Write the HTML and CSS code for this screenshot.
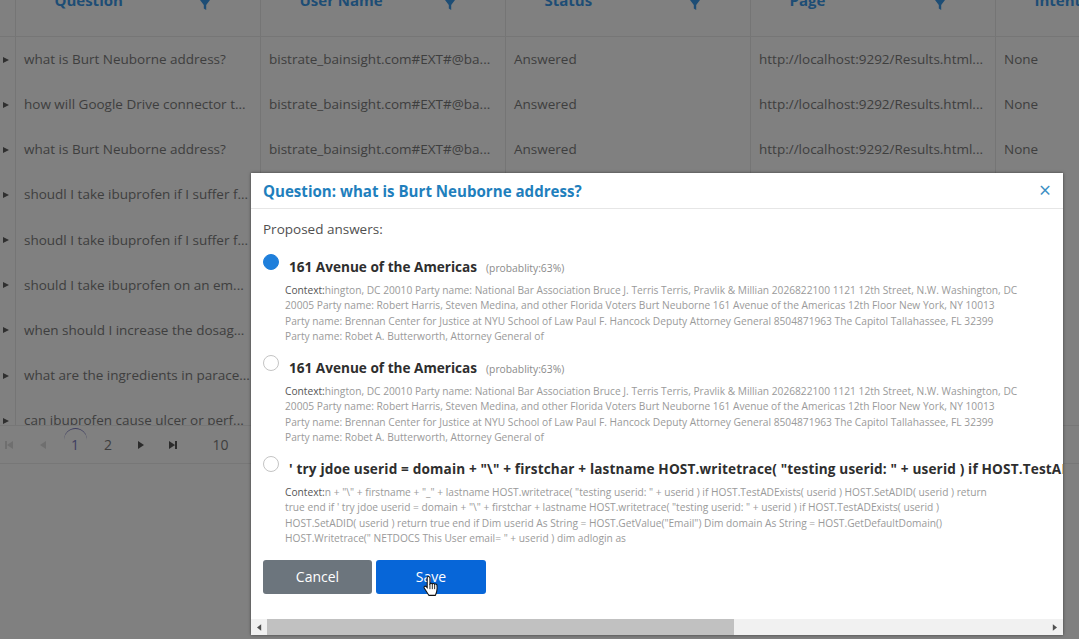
FILE: index.html
```html
<!DOCTYPE html>
<html lang="en">
<head>
<meta charset="utf-8">
<title>Questions</title>
<link rel="stylesheet" href="styles.css">
</head>
<body>
<main class="grid">
  <div class="head row-cols">
    <div class="expander"></div>
    <div class="hcell"><span class="hlabel">Question</span><svg class="funnel" viewBox="0 0 10 10"><path d="M0 0h10L6.200 5v5L3.800 8.500V5z"/></svg></div>
    <div class="hcell"><span class="hlabel">User Name</span><svg class="funnel" viewBox="0 0 10 10"><path d="M0 0h10L6.200 5v5L3.800 8.500V5z"/></svg></div>
    <div class="hcell"><span class="hlabel">Status</span><svg class="funnel" viewBox="0 0 10 10"><path d="M0 0h10L6.200 5v5L3.800 8.500V5z"/></svg></div>
    <div class="hcell"><span class="hlabel">Page</span><svg class="funnel" viewBox="0 0 10 10"><path d="M0 0h10L6.200 5v5L3.800 8.500V5z"/></svg></div>
    <div class="hcell hcell-last"><span class="hlabel">Intent</span></div>
  </div>
  <div class="rows">
    <div class="row row-cols"><div class="expander"><i class="caret"></i></div><div class="cell">what is Burt Neuborne address?</div><div class="cell">bistrate_bainsight.com#EXT#@ba...</div><div class="cell">Answered</div><div class="cell">http://localhost:9292/Results.html...</div><div class="cell cell-last">None</div></div>
    <div class="row row-cols"><div class="expander"><i class="caret"></i></div><div class="cell">how will Google Drive connector t...</div><div class="cell">bistrate_bainsight.com#EXT#@ba...</div><div class="cell">Answered</div><div class="cell">http://localhost:9292/Results.html...</div><div class="cell cell-last">None</div></div>
    <div class="row row-cols"><div class="expander"><i class="caret"></i></div><div class="cell">what is Burt Neuborne address?</div><div class="cell">bistrate_bainsight.com#EXT#@ba...</div><div class="cell">Answered</div><div class="cell">http://localhost:9292/Results.html...</div><div class="cell cell-last">None</div></div>
    <div class="row row-cols"><div class="expander"><i class="caret"></i></div><div class="cell">shoudl I take ibuprofen if I suffer f...</div><div class="cell"></div><div class="cell"></div><div class="cell"></div><div class="cell cell-last"></div></div>
    <div class="row row-cols"><div class="expander"><i class="caret"></i></div><div class="cell">shoudl I take ibuprofen if I suffer f...</div><div class="cell"></div><div class="cell"></div><div class="cell"></div><div class="cell cell-last"></div></div>
    <div class="row row-cols"><div class="expander"><i class="caret"></i></div><div class="cell">should I take ibuprofen on an em...</div><div class="cell"></div><div class="cell"></div><div class="cell"></div><div class="cell cell-last"></div></div>
    <div class="row row-cols"><div class="expander"><i class="caret"></i></div><div class="cell">when should I increase the dosag...</div><div class="cell"></div><div class="cell"></div><div class="cell"></div><div class="cell cell-last"></div></div>
    <div class="row row-cols"><div class="expander"><i class="caret"></i></div><div class="cell">what are the ingredients in parace...</div><div class="cell"></div><div class="cell"></div><div class="cell"></div><div class="cell cell-last"></div></div>
    <div class="row row-cols"><div class="expander"><i class="caret"></i></div><div class="cell">can ibuprofen cause ulcer or perf...</div><div class="cell"></div><div class="cell"></div><div class="cell"></div><div class="cell cell-last"></div></div>
  </div>
  <nav class="pager">
    <svg class="pg-icon dim" viewBox="0 0 10 10"><path d="M1 1h2v8H1zM9 1v8L3 5z"/></svg>
    <svg class="pg-icon dim" viewBox="0 0 10 10"><path d="M8 1v8L2 5z"/></svg>
    <span class="pg-num pg-current">1</span>
    <span class="pg-num">2</span>
    <svg class="pg-icon" viewBox="0 0 10 10"><path d="M2 1v8l6-4z"/></svg>
    <svg class="pg-icon" viewBox="0 0 10 10"><path d="M1 1v8l6-4zM7 1h2v8H7z"/></svg>
    <span class="pg-size">10</span>
  </nav>
</main>

<section class="modal">
  <header class="modal-head">
    <h2 class="modal-title">Question: what is Burt Neuborne address?</h2>
    <span class="modal-close">×</span>
  </header>
  <div class="modal-body">
    <p class="lead">Proposed answers:</p>
    <article class="answer">
      <div class="answer-top"><i class="radio radio-on"></i><strong class="answer-title">161 Avenue of the Americas</strong><span class="prob">(probablity:63%)</span></div>
      <p class="context"><span class="ctx-label">Context:</span>hington, DC 20010 Party name: National Bar Association Bruce J. Terris Terris, Pravlik &amp; Millian 2026822100 1121 12th Street, N.W. Washington, DC<br>20005 Party name: Robert Harris, Steven Medina, and other Florida Voters Burt Neuborne 161 Avenue of the Americas 12th Floor New York, NY 10013<br>Party name: Brennan Center for Justice at NYU School of Law Paul F. Hancock Deputy Attorney General 8504871963 The Capitol Tallahassee, FL 32399<br>Party name: Robet A. Butterworth, Attorney General of</p>
    </article>
    <article class="answer">
      <div class="answer-top"><i class="radio"></i><strong class="answer-title">161 Avenue of the Americas</strong><span class="prob">(probablity:63%)</span></div>
      <p class="context"><span class="ctx-label">Context:</span>hington, DC 20010 Party name: National Bar Association Bruce J. Terris Terris, Pravlik &amp; Millian 2026822100 1121 12th Street, N.W. Washington, DC<br>20005 Party name: Robert Harris, Steven Medina, and other Florida Voters Burt Neuborne 161 Avenue of the Americas 12th Floor New York, NY 10013<br>Party name: Brennan Center for Justice at NYU School of Law Paul F. Hancock Deputy Attorney General 8504871963 The Capitol Tallahassee, FL 32399<br>Party name: Robet A. Butterworth, Attorney General of</p>
    </article>
    <article class="answer">
      <div class="answer-top"><i class="radio"></i><strong class="answer-title answer-title-long">' try jdoe userid = domain + "\" + firstchar + lastname HOST.writetrace( "testing userid: " + userid ) if HOST.TestADExists( userid )</strong></div>
      <p class="context"><span class="ctx-label">Context:</span>n + "\" + firstname + "_" + lastname HOST.writetrace( "testing userid: " + userid ) if HOST.TestADExists( userid ) HOST.SetADID( userid ) return<br>true end if ' try jdoe userid = domain + "\" + firstchar + lastname HOST.writetrace( "testing userid: " + userid ) if HOST.TestADExists( userid )<br>HOST.SetADID( userid ) return true end if Dim userid As String = HOST.GetValue("Email") Dim domain As String = HOST.GetDefaultDomain()<br>HOST.Writetrace(" NETDOCS This User email= " + userid ) dim adlogin as</p>
    </article>
    <div class="actions">
      <button class="btn btn-cancel">Cancel</button>
      <button class="btn btn-save">Save</button>
    </div>
  </div>
  <div class="hscroll">
    <svg class="sb-arrow" viewBox="0 0 6 8"><path d="M5 0v8L0 4z"/></svg>
    <div class="sb-track"><div class="sb-thumb"></div></div>
    <svg class="sb-arrow sb-arrow-r" viewBox="0 0 6 8"><path d="M1 0v8l5-4z"/></svg>
  </div>
</section>

<svg class="cursor" viewBox="0 0 20 26"><path d="M6 2.200c1.300-1 2.800 0 2.800 1.300V10c.7-.8 2-.8 2.700.1.800-.7 2-.6 2.600.3.900-.6 2.200-.2 2.600.9.300 2 .3 5-.2 7.200-.4 1.900-1 3-1.600 4.500H7.600C6.500 21 4.300 18 2.300 14.600c-.8-1.400 1-2.700 2.100-1.600l1.300 1.400V3.500c0-.5 0-1 .3-1.300z" fill="#fff" stroke="#111" stroke-width="1.200"/><path d="M8.800 10v6M11.500 10.100V16M14.100 10.400V16" stroke="#111" fill="none"/></svg>
</body>
</html>
```

FILE: styles.css
```css
* { box-sizing: border-box; }
html, body { height: 100%; }
body {
  margin: 0;
  background: #808080;
  color: #3e3e3e;
  font-family: "Open Sans", "Noto Sans", sans-serif;
  font-size: 14px;
  overflow: hidden;
  position: relative;
}
.row-cols { display: grid; grid-template-columns: 15px 245px 245px 245px 245px 1fr; }
.head { height: 37px; border-bottom: 1px solid #767676; }
.expander { display: flex; align-items: center; }
.hcell {
  border-left: 1px solid #757575;
  display: flex;
  align-items: flex-start;
  position: relative;
  overflow: hidden;
}
.hlabel {
  margin: -10px 0 0 38.500px;
  color: #1d4d75;
  font-weight: 700;
  font-size: 15px;
  line-height: 20px;
}
.funnel { position: absolute; left: 184px; top: 0; width: 10px; height: 10px; fill: #1d4d75; }
.rows { height: 388px; overflow: hidden; }
.row { height: 45.150px; }
.caret {
  display: block;
  margin-left: 3px;
  border-left: 6px solid #2f2f2f;
  border-top: 3.500px solid transparent;
  border-bottom: 3.500px solid transparent;
}
.cell {
  border-left: 1px solid #757575;
  padding: 0 8px 1px;
  display: flex;
  align-items: center;
  white-space: nowrap;
  overflow: hidden;
  font-size: 13.500px;
}
.pager {
  height: 39px;
  background: #808080;
  border-top: 1px solid #777;
  border-bottom: 1px solid #777;
  display: flex;
  align-items: center;
  padding-left: 4px;
  position: relative;
}
.pg-icon { width: 10px; height: 10px; fill: #2b2b2b; margin: 0 11px; }
.pg-icon.dim { fill: #6f6f6f; margin: 0 11.500px 0 0; }
.pg-icon.dim + .pg-icon.dim { margin: 0 0 0 12px; }
.pg-num { width: 33px; text-align: center; font-size: 14px; color: #3e3e3e; position: relative; }
.pg-icon.dim + .pg-icon.dim + .pg-num { margin-left: 11px; }
.pg-current { color: #3e3e60; }
.pg-current::before {
  content: "";
  position: absolute;
  left: 5px;
  top: -7px;
  width: 23px;
  height: 23px;
  border-top: 1px solid #3e3e60;
  border-radius: 50%;
}
.pg-size { margin-left: 24px; font-size: 14px; }

.modal {
  position: absolute;
  left: 251px;
  top: 173px;
  width: 812px;
  height: 462px;
  background: #fff;
  box-shadow: 0 0 3px rgba(0, 0, 0, .5);
  display: flex;
  flex-direction: column;
  overflow: hidden;
}
.modal-head {
  height: 36px;
  flex: none;
  border-bottom: 1px solid #e6e6e6;
  display: flex;
  align-items: center;
  justify-content: space-between;
  padding: 0 12px 0 12px;
}
.modal-title { margin: 0; font-size: 15.100px; font-weight: 700; color: #1f7fbd; }
.modal-close { color: #3b8fc4; font-size: 21px; line-height: 1; }
.modal-body { flex: 1; padding: 11px 0 0 12px; min-height: 0; overflow: hidden; }
.lead { margin: 0 0 15px; font-size: 13.500px; line-height: 19px; color: #505050; }
.answer { height: 101px; }
.answer-top { display: flex; align-items: flex-start; white-space: nowrap; height: 29px; }
.radio {
  flex: none;
  width: 16px;
  height: 16px;
  border: 1px solid #c4c4c4;
  border-radius: 50%;
  background: #fff;
}
.radio-on { background: #1f7fdb; border-color: #1f7fdb; }
.answer-title { margin: 3px 0 0 10px; font-size: 13.600px; line-height: 20px; color: #2e2e2e; font-weight: 700; }
.answer-title-long { letter-spacing: .15px; }
.prob { margin: 6px 0 0 9px; font-size: 10.300px; line-height: 16px; color: #8b8b8b; }
.context {
  margin: 0 0 0 22px;
  white-space: nowrap;
  font-size: 10.200px;
  line-height: 15.400px;
  color: #9a9a9a;
}
.ctx-label { color: #555; }
.actions { display: flex; gap: 4px; margin-top: 3px; }
.btn {
  width: 109px;
  height: 34px;
  border: 0;
  border-radius: 3px;
  padding: 0 0 2px;
  color: #fff;
  font: 14px "Open Sans", "Noto Sans", sans-serif;
}
.btn-cancel { background: #6c757d; }
.btn-save { background: #0766d8; width: 110px; }
.hscroll { height: 16px; flex: none; background: #f1f1f1; display: flex; align-items: center; }
.sb-arrow { width: 5px; height: 7px; fill: #505050; flex: none; margin: 0 6px; }
.sb-arrow-r { margin: 0 6px 0 5px; }
.sb-track { flex: 1; height: 100%; }
.sb-thumb { width: 467px; height: 100%; margin-left: -1px; background: #c1c1c1; }
.cursor { position: absolute; left: 422px; top: 575px; width: 18px; height: 23px; }
```
